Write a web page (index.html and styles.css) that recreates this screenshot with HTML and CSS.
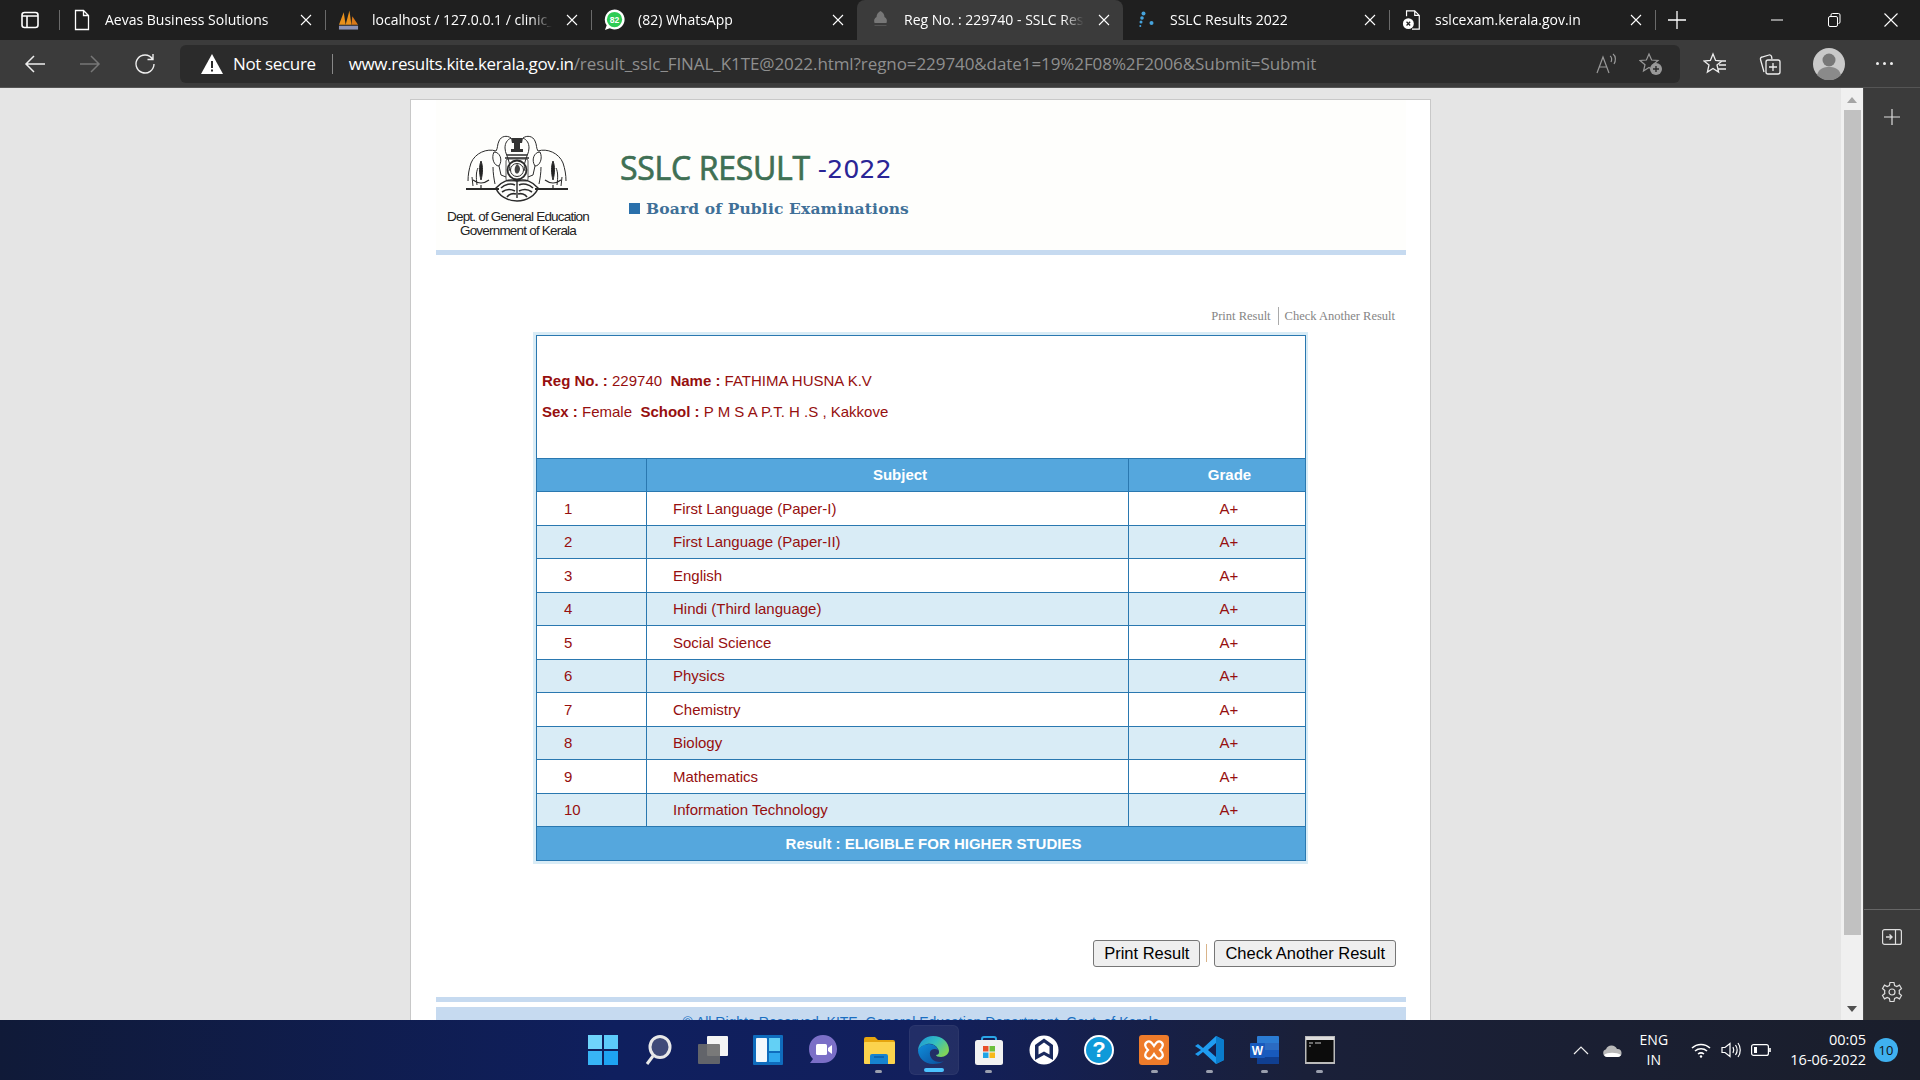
FILE: index.html
```html
<!DOCTYPE html>
<html lang="en">
<head>
    <meta charset="UTF-8">
    <title>Reg No. : 229740 - SSLC Result</title>
    <link rel="stylesheet" href="styles.css">
</head>
<body>
    <svg class="defs" width="0" height="0">
        <symbol id="x" viewBox="0 0 12 12"><path d="M1 1l10 10M11 1L1 11" fill="none" stroke="currentColor" stroke-width="1.1"/></symbol>
        <linearGradient id="edgeTop" x1="0" y1="0" x2="1" y2=".6"><stop offset="0" stop-color="#1b8fd8"/><stop offset=".55" stop-color="#33bfc0"/><stop offset="1" stop-color="#7fd35a"/></linearGradient>
        <linearGradient id="edgeLow" x1="0" y1="0" x2="1" y2="1"><stop offset="0" stop-color="#0f8fdc"/><stop offset="1" stop-color="#0b4c9a"/></linearGradient>
    </svg>

    <!-- tab strip -->
    <div class="tabstrip">
        <div class="tab-menu">
            <svg width="20" height="20" viewBox="0 0 20 20" fill="none" stroke="#fff" stroke-width="1.6"><rect x="2" y="2.5" width="16" height="15" rx="2.5"/><path d="M2 6h16M7 6v11" /></svg>
        </div>
        <div class="tab sep">
            <svg class="favicon" width="20" height="22" viewBox="0 0 20 22" fill="none" stroke="#fff" stroke-width="1.3"><path d="M3.5 1.5h8l5 5v14h-13zM11.5 1.5v5h5"/></svg>
            <span class="tab-title">Aevas Business Solutions</span>
            <svg class="tab-close"><use href="#x"/></svg>
        </div>
        <div class="tab sep">
            <svg class="favicon" width="21" height="22" viewBox="0 0 22 22"><path d="M1 16L6 3l2 13zM8 16L12 1l2 15z" fill="#e8901c"/><path d="M14 16l1-9 6 9z" fill="#d9791a"/><rect x="1" y="17" width="20" height="4" fill="#8d93b5"/></svg>
            <span class="tab-title">localhost / 127.0.0.1 / clinic_management</span>
            <svg class="tab-close"><use href="#x"/></svg>
        </div>
        <div class="tab sep">
            <svg class="favicon" width="21" height="24" viewBox="0 0 22 24"><path d="M11 1a10.500 10.500 0 1 1-5 19.700L1 22.500l1.800-5A10.500 10.500 0 0 1 11 1z" fill="#fff"/><circle cx="11" cy="11.500" r="8" fill="#2ecc55"/><text x="11" y="15" text-anchor="middle" class="wa-count">82</text></svg>
            <span class="tab-title">(82) WhatsApp</span>
            <svg class="tab-close"><use href="#x"/></svg>
        </div>
        <div class="tab active">
            <svg class="favicon" width="21" height="20" viewBox="0 0 18 20" fill="#777"><path d="M9 1c2 1 4 3 4 6 2 1 3 3 2 6H3C2 10 3 8 5 7c0-3 2-5 4-6z"/><rect x="3" y="15" width="12" height="1" fill="#555"/></svg>
            <span class="tab-title">Reg No. : 229740 - SSLC Result 2022</span>
            <svg class="tab-close"><use href="#x"/></svg>
        </div>
        <div class="tab">
            <svg class="favicon" width="21" height="20" viewBox="0 0 20 20" fill="#46a3dc"><circle cx="7" cy="3.5" r="2"/><circle cx="5.5" cy="8" r="1.8"/><circle cx="4.5" cy="12" r="1.5"/><circle cx="3.8" cy="16" r="1"/><circle cx="15" cy="13" r="2"/></svg>
            <span class="tab-title">SSLC Results 2022</span>
            <svg class="tab-close"><use href="#x"/></svg>
        </div>
        <div class="tab sep">
            <svg class="favicon" width="20" height="24" viewBox="0 0 22 24" fill="none" stroke="#fff" stroke-width="1.3"><path d="M5 8V2h9l5 5v15h-8M14 2v5h5"/><circle cx="7" cy="16" r="6" fill="#fff" stroke="none"/><path d="M5 14l4 4M9 14l-4 4" stroke="#222" stroke-width="1.4"/></svg>
            <span class="tab-title">sslcexam.kerala.gov.in</span>
            <svg class="tab-close"><use href="#x"/></svg>
        </div>
        <div class="new-tab">
            <svg width="20" height="20" viewBox="0 0 20 20"><path d="M10 1v18M1 10h18" stroke="#fff" stroke-width="1.3"/></svg>
        </div>
        <div class="win-controls">
            <svg width="16" height="16" viewBox="0 0 16 16"><path d="M2 8h12" stroke="#fff" stroke-width="1"/></svg>
            <svg width="16" height="16" viewBox="0 0 16 16" fill="none" stroke="#fff" stroke-width="1"><rect x="2.5" y="4.5" width="9" height="10" rx="1.5"/><path d="M5 4.5V3a1.5 1.5 0 0 1 1.5-1.5h6A1.5 1.5 0 0 1 14 3v7a1.5 1.5 0 0 1-1.5 1.5"/></svg>
            <svg width="16" height="16" viewBox="0 0 16 16"><path d="M1.5 1.5l13 13M14.5 1.5l-13 13" stroke="#fff" stroke-width="1.1"/></svg>
        </div>
    </div>

    <!-- toolbar -->
    <div class="toolbar">
        <div class="nav-btns">
            <svg width="22" height="22" viewBox="0 0 22 22" fill="none" stroke="#eee" stroke-width="1.5"><path d="M21 11H2M10 3l-8 8 8 8"/></svg>
            <svg width="22" height="22" viewBox="0 0 22 22" fill="none" stroke="#777" stroke-width="1.5"><path d="M1 11h19M12 3l8 8-8 8"/></svg>
            <svg width="22" height="22" viewBox="0 0 22 22" fill="none" stroke="#eee" stroke-width="1.4"><path d="M18.5 6A9 9 0 1 0 20 11M19 1v5.500h-5.500"/></svg>
        </div>
        <div class="addressbar">
            <svg class="warn" width="22" height="20" viewBox="0 0 22 20"><path d="M11 0l11 20H0z" fill="#fff"/><path d="M10 7h2v7h-2zM10 15.500h2v2h-2z" fill="#2b2b2b"/></svg>
            <span class="not-secure">Not secure</span>
            <span class="addr-sep"></span>
            <span class="url"><span class="url-host">www.results.kite.kerala.gov.in</span>/result_sslc_FINAL_K1TE@2022.html?regno=229740&amp;date1=19%2F08%2F2006&amp;Submit=Submit</span>
            <div class="addr-icons">
                <svg width="22" height="22" viewBox="0 0 22 22" fill="none" stroke="#999" stroke-width="1.2"><path d="M2 20L8 4l6 16M4 14h8M15 3c2 1 2 4 1 6M18 1c3 2 3 7 1 10"/></svg>
                <svg width="24" height="24" viewBox="0 0 24 24"><path d="M10 2l2.600 6 6.400.5-5 4.200 1.500 6.300L10 15.500 4.500 19 6 12.700 1 8.500 7.400 8z" fill="none" stroke="#999" stroke-width="1.2"/><circle cx="17" cy="17" r="6" fill="#999"/><path d="M17 14v6M14 17h6" stroke="#2b2b2b" stroke-width="1.4"/></svg>
            </div>
        </div>
        <div class="tool-icons">
            <svg width="24" height="24" viewBox="0 0 24 24" fill="none" stroke="#eee" stroke-width="1.3"><path d="M10 2l2.600 6.500 6.400.5-5 4 1.600 7L10 16.500 4.400 20 6 13 1 9l6.400-.5zM15 9h8M16 13h7M15 17h8"/></svg>
            <svg width="24" height="24" viewBox="0 0 24 24" fill="none" stroke="#eee" stroke-width="1.3"><path d="M6 20L2.500 7.500a2 2 0 0 1 1.500-2.500l7-2a2 2 0 0 1 2.500 1.500L14 7"/><rect x="8" y="8" width="14" height="14" rx="2"/><path d="M15 11v8M11 15h8"/></svg>
            <svg width="32" height="32" viewBox="0 0 32 32"><circle cx="16" cy="16" r="16" fill="#c9c9c9"/><circle cx="16" cy="12" r="6.500" fill="#777"/><path d="M4 27c2-7 7-8 12-8s10 1 12 8a16 16 0 0 1-24 0z" fill="#8a8a8a"/></svg>
            <span class="dots"><i></i><i></i><i></i></span>
        </div>
    </div>

    <div class="browser-body">
        <div class="viewport">
            <div class="card">
                <div class="banner">
                    <div class="emblem">
                        <svg class="emblem-art" width="107" height="68" viewBox="0 0 107 68" fill="none" stroke="#2a2a2a" stroke-width="1">
                            <g id="emblemHalf">
                                <path d="M46 3C42 0 36 1 34 6c-2 4-1 7-3 10C22 13 10 18 6 28c-2 6-3 12-3 18"/>
                                <path d="M46 3c-4 2-6 5-6 10 0 5 3 9 4 14 1 3 1 6 0 9"/>
                                <path d="M29 17c6 0 9 8 5 14-5 0-8-8-5-14zM34 31l2 9 5 2M7 42l1 9M13 33c-2 4-2 9-1 17M28 32c0 6 1 12 2 17"/>
                                <path d="M16 26c-2 5-2 12 0 19 2-7 2-14 0-19z" fill="#222"/>
                                <path d="M8 45q8 6 16 0M16 50v4" stroke-width="1.200"/>
                                <path d="M1 54h33" stroke-width="2.200"/>
                                <path d="M52 46c-8-3-16 1-21 7 2 7 11 13 21 13" stroke-width="1.400"/>
                                <path d="M36 53c4-4 10-5 14-3M37 57c4-3 9-3 13-1M42 62c2-3 6-4 9-3" stroke-width="1.600"/>
                            </g>
                            <use href="#emblemHalf" transform="translate(104 0) scale(-1 1)"/>
                            <path d="M46 3h12l-1 5h-2v6h3v3H46v-3h3V8h-2z" fill="#333" stroke="none"/>
                            <path d="M42 20h20M40 23h24" stroke-width="1.300"/>
                            <rect x="41" y="24" width="22" height="22" rx="2" stroke-width=".8"/>
                            <circle cx="52" cy="35" r="9.500" stroke-width="1.800"/>
                            <circle cx="52" cy="35" r="6.500"/>
                            <path d="M52 29c3 2 4 5 2 8-1 2-3 2-4 0-1-3 0-6 2-8z" fill="#444" stroke="none"/>
                            <path d="M52 45v18" stroke-width="1.400"/>
                        </svg>
                        <div class="emblem-text">Dept. of General Education</div>
                        <div class="emblem-text">Government of Kerala</div>
                    </div>
                    <div class="banner-title">
                        <div class="title-line">SSLC RESULT <span class="title-year">-2022</span></div>
                        <div class="board-line"><span class="board-mark"></span>Board of Public Examinations</div>
                    </div>
                </div>
                <div class="rule"></div>

                <div class="top-links">Print Result<span class="link-sep"></span>Check Another Result</div>

                <div class="result-box">
                    <table class="result-table">
                        <colgroup><col class="col-no"><col class="col-subject"><col class="col-grade"></colgroup>
                        <tr>
                            <td colspan="3" class="info-cell">
                                <div class="info-line"><b>Reg No. :</b> 229740 &nbsp;<b>Name :</b> FATHIMA HUSNA K.V</div>
                                <div class="info-line info-second"><b>Sex :</b> Female &nbsp;<b>School :</b> P M S A P.T. H .S , Kakkove</div>
                            </td>
                        </tr>
                        <tr class="head-row"><th></th><th class="shift">Subject</th><th class="shift">Grade</th></tr>
                        <tr><td class="no">1</td><td class="subject">First Language (Paper-I)</td><td class="grade">A+</td></tr>
                        <tr class="alt"><td class="no">2</td><td class="subject">First Language (Paper-II)</td><td class="grade">A+</td></tr>
                        <tr><td class="no">3</td><td class="subject">English</td><td class="grade">A+</td></tr>
                        <tr class="alt"><td class="no">4</td><td class="subject">Hindi (Third language)</td><td class="grade">A+</td></tr>
                        <tr><td class="no">5</td><td class="subject">Social Science</td><td class="grade">A+</td></tr>
                        <tr class="alt"><td class="no">6</td><td class="subject">Physics</td><td class="grade">A+</td></tr>
                        <tr><td class="no">7</td><td class="subject">Chemistry</td><td class="grade">A+</td></tr>
                        <tr class="alt"><td class="no">8</td><td class="subject">Biology</td><td class="grade">A+</td></tr>
                        <tr><td class="no">9</td><td class="subject">Mathematics</td><td class="grade">A+</td></tr>
                        <tr class="alt"><td class="no">10</td><td class="subject">Information Technology</td><td class="grade">A+</td></tr>
                        <tr class="head-row"><th colspan="3" class="shift">Result : ELIGIBLE FOR HIGHER STUDIES</th></tr>
                    </table>
                </div>

                <div class="actions">
                    <button type="button">Print Result</button>
                    <span class="action-sep"></span>
                    <button type="button">Check Another Result</button>
                </div>

                <div class="rule rule-bottom"></div>
                <div class="page-footer">© All Rights Reserved, KITE, General Education Department, Govt. of Kerala</div>
            </div>
        </div>
        <div class="scrollbar">
            <span class="arrow-up"></span>
            <span class="thumb"></span>
            <span class="arrow-down"></span>
        </div>
        <div class="sidebar">
            <svg class="side-plus" width="16" height="16" viewBox="0 0 16 16"><path d="M8 0v16M0 8h16" stroke="#ddd" stroke-width="1.2"/></svg>
            <div class="side-bottom">
                <svg width="20" height="16" viewBox="0 0 20 16" fill="none" stroke="#ddd" stroke-width="1.2"><rect x=".6" y=".6" width="18.800" height="14.800" rx="2"/><path d="M13.500 1v14"/><path d="M4 8h6M7.500 5.500L10 8l-2.500 2.500" stroke-width="1.400"/></svg>
                <svg width="22" height="22" viewBox="0 0 22 22" fill="none" stroke="#ddd" stroke-width="1.2"><circle cx="11" cy="11" r="3"/><path d="M9 1.500h4l.6 3 2.200 1 2.700-1.400 2 3.400-2.300 2a6 6 0 0 1 0 3l2.300 2-2 3.400-2.700-1.400-2.200 1-.6 3H9l-.6-3-2.200-1-2.700 1.400-2-3.400 2.300-2a6 6 0 0 1 0-3l-2.300-2 2-3.400 2.700 1.400 2.200-1z"/></svg>
            </div>
        </div>
    </div>

    <!-- windows taskbar -->
    <div class="taskbar">
        <div class="task-apps">
            <div class="app"><svg width="30" height="30" viewBox="0 0 30 30"><g fill="#4cc2ff"><rect x="0" y="0" width="14" height="14" fill="#6fd4fb"/><rect x="16" y="0" width="14" height="14" fill="#5ccbfb"/><rect x="0" y="16" width="14" height="14" fill="#38b4f5"/><rect x="16" y="16" width="14" height="14" fill="#1ea3f2"/></g></svg></div>
            <div class="app"><svg width="28" height="30" viewBox="0 0 28 30" fill="#3f4a78" stroke="#e8e8e8" stroke-width="3"><ellipse cx="16" cy="12" rx="10" ry="10.500"/><path d="M9 21L3 29" fill="none"/></svg></div>
            <div class="app"><svg width="32" height="30" viewBox="0 0 32 30"><rect x="10" y="1" width="21" height="20" rx="1" fill="#f4f4f4"/><rect x="1" y="9" width="22" height="20" rx="1" fill="#6b6b6b" fill-opacity=".9"/></svg></div>
            <div class="app"><svg width="30" height="30" viewBox="0 0 30 30"><rect width="30" height="30" rx="1" fill="#0f6cbd"/><rect x="3" y="3" width="11" height="24" rx="1" fill="#f4f8fc"/><rect x="16" y="3" width="11" height="13" fill="#63d0f5"/><rect x="16" y="18" width="11" height="9" fill="#2fa8ee"/></svg></div>
            <div class="app"><svg width="30" height="32" viewBox="0 0 30 32"><path d="M15 1c8 0 14 6 14 14s-6 14-14 14H2l3-4C2 22 1 19 1 15 1 7 7 1 15 1z" fill="#7b6fc7"/><rect x="8" y="10" width="11" height="11" rx="1.500" fill="#fff"/><path d="M20 14l4-3v9l-4-3z" fill="#fff"/></svg></div>
            <div class="app running"><svg width="32" height="28" viewBox="0 0 32 28"><path d="M1 3a2 2 0 0 1 2-2h9l3 3h15a2 2 0 0 1 2 2v4H1z" fill="#e6a50e"/><rect x="1" y="6" width="31" height="22" rx="1" fill="#fcd34d"/><path d="M9 18h14a2 2 0 0 1 2 2v8H7v-8a2 2 0 0 1 2-2z" fill="#1783d0"/><path d="M11 21h10" stroke="#0b5ea8" stroke-width="1.500"/></svg></div>
            <div class="app running app-active"><svg width="31" height="28" viewBox="0 0 31 28"><path d="M0 14c2-3 6-6 11-6 5 0 8 3 9 6-3-2-7-1-8 2-1 5 3 10 10 10 2 0 4-1 5-2-3 3-7 4-12 4C7 28 0 22 0 14z" fill="url(#edgeLow)"/><path d="M15 0c9 0 16 6 16 14 0 4-4 7-8 7-3 0-5-1-5-2 3 0 4-3 2-6-2-4-6-6-11-5-4 1-7 3-9 6C1 6 7 0 15 0z" fill="url(#edgeTop)"/></svg></div>
            <div class="app running"><svg width="30" height="30" viewBox="0 0 30 30"><path d="M8 7V4a2 2 0 0 1 2-2h10a2 2 0 0 1 2 2v3" fill="none" stroke="#2aa6e8" stroke-width="2"/><rect x="1" y="5" width="28" height="25" rx="2.500" fill="#f2f2f2"/><rect x="9" y="11" width="5.500" height="5.500" fill="#e8502a"/><rect x="15.500" y="11" width="5.500" height="5.500" fill="#6cbf3c"/><rect x="9" y="17.500" width="5.500" height="5.500" fill="#1ea3e6"/><rect x="15.500" y="17.500" width="5.500" height="5.500" fill="#f8b91a"/></svg></div>
            <div class="app"><svg width="30" height="30" viewBox="0 0 30 30"><circle cx="15" cy="15" r="14.500" fill="#fff"/><path d="M15 3.500l9 6.500v15l-9-5-9 5V10z" fill="#1a2a5e"/><path d="M15 7.500l5.500 4v8l-5.500-3-5.500 3v-8z" fill="#fff"/></svg></div>
            <div class="app"><svg width="30" height="30" viewBox="0 0 30 30"><circle cx="15" cy="15" r="15" fill="#fff"/><circle cx="15" cy="15" r="13" fill="#0f9ad9"/><text x="15" y="22" text-anchor="middle" class="help-mark">?</text></svg></div>
            <div class="app running"><svg width="30" height="30" viewBox="0 0 30 30"><rect width="30" height="30" rx="3" fill="#ee7b2a"/><path d="M8 7c3-2 5 1 7 4 2-3 4-6 7-4s2 5-1 8c3 3 4 6 1 8s-5-1-7-4c-2 3-4 6-7 4s-2-5 1-8c-3-3-4-6-1-8z" fill="none" stroke="#fff" stroke-width="2.200"/></svg></div>
            <div class="app running"><svg width="30" height="30" viewBox="0 0 30 30"><path d="M21 1l8 4v20l-8 4L8 17l-5 4-3-2 6-4-6-4 3-2 5 4z" fill="#1f9cf0"/><path d="M21 8l-8 7 8 7z" fill="#14204f"/><path d="M21 1l8 4v20l-8 4z" fill="#0a7ccc"/></svg></div>
            <div class="app running"><svg width="30" height="30" viewBox="0 0 30 30"><rect x="7" y="1" width="22" height="28" rx="1" fill="#2b7cd3"/><rect x="7" y="8" width="22" height="7" fill="#2b6bc2"/><rect x="7" y="15" width="22" height="7" fill="#185abd"/><rect x="7" y="22" width="22" height="7" fill="#103f91"/><rect x="0" y="8" width="15" height="15" rx="1" fill="#185abd"/><text x="7.500" y="20" text-anchor="middle" class="word-mark">W</text></svg></div>
            <div class="app running"><svg width="30" height="28" viewBox="0 0 30 28"><rect x="0" y="0" width="30" height="28" fill="#bbb"/><rect x="1" y="1" width="28" height="3" fill="#ddd"/><rect x="1.500" y="4" width="27" height="22" fill="#0c0c0c"/><path d="M4 7h4M10 7h6M4 10h2" stroke="#ccc" stroke-width="1"/></svg></div>
        </div>
        <div class="tray">
            <svg class="tray-chevron" width="16" height="9" viewBox="0 0 16 9"><path d="M1 8l7-7 7 7" fill="none" stroke="#eee" stroke-width="1.200"/></svg>
            <svg class="tray-cloud" width="20" height="13" viewBox="0 0 20 13"><path d="M5 13a4 4 0 0 1-1-7.800A6 6 0 0 1 15 5a4 4 0 0 1 1 8z" fill="#b9b9b9"/><path d="M2 11c3-3 13-3 17 0-1 1-2 2-3 2H5c-1 0-2-1-3-2z" fill="#fff"/></svg>
            <div class="tray-lang"><span>ENG</span><span>IN</span></div>
            <svg class="tray-wifi" width="20" height="16" viewBox="0 0 20 16" fill="none" stroke="#fff" stroke-width="1.500"><path d="M1 6a13 13 0 0 1 18 0M4 9a9 9 0 0 1 12 0M7 12a5 5 0 0 1 6 0"/><circle cx="10" cy="14.500" r="1.200" fill="#fff" stroke="none"/></svg>
            <svg class="tray-sound" width="20" height="16" viewBox="0 0 20 16" fill="none" stroke="#fff" stroke-width="1.200"><path d="M1 5.500h3L9 1.500v13l-5-4H1zM12 5c1 2 1 4 0 6M14.500 3c2 3 2 7 0 10M17 1c3 4 3 10 0 14"/></svg>
            <svg class="tray-battery" width="20" height="12" viewBox="0 0 20 12" fill="none" stroke="#fff" stroke-width="1.200"><rect x=".6" y=".6" width="16.800" height="10.800" rx="2"/><rect x="3" y="3" width="3" height="6" fill="#fff" stroke="none"/><path d="M19 4v4" stroke-width="1.600"/></svg>
            <div class="tray-clock"><span>00:05</span><span>16-06-2022</span></div>
            <span class="tray-badge">10</span>
        </div>
    </div>
</body>
</html>
```

FILE: styles.css
```css
html, body {
    margin: 0;
    padding: 0;
    height: 100%;
}

body {
    width: 1920px;
    height: 1080px;
    overflow: hidden;
    display: flex;
    flex-direction: column;
    font-family: "Open Sans", "Noto Sans", sans-serif;
    color: #fff;
}

.defs {
    position: absolute;
}

/* tabs */
.tabstrip {
    height: 40px;
    flex: none;
    display: flex;
    align-items: center;
    background: #1f1f1f;
    font-size: 14px;
}

.tab-menu {
    width: 59px;
    box-sizing: border-box;
    padding-left: 20px;
    display: flex;
}

.tab {
    width: 266px;
    height: 40px;
    box-sizing: border-box;
    flex: none;
    display: flex;
    align-items: center;
    padding: 0 11px 0 13px;
    position: relative;
}

.tab.sep::before,
.new-tab::before {
    content: "";
    position: absolute;
    left: 0;
    top: 10px;
    height: 20px;
    width: 1px;
    background: #6a6a6a;
}

.tab.active {
    background: #3b3b3b;
    border-radius: 8px 8px 0 0;
}

.favicon {
    flex: none;
    margin-right: 13px;
}

.tab-title {
    flex: 1;
    padding-bottom: 2px;
    white-space: nowrap;
    overflow: hidden;
    -webkit-mask-image: linear-gradient(90deg, #000 88%, transparent 100%);
    mask-image: linear-gradient(90deg, #000 88%, transparent 100%);
}

.tab-close {
    flex: none;
    width: 12px;
    height: 12px;
    margin-left: 14px;
    margin-right: 2px;
    color: #fff;
}

.wa-count {
    font: bold 9px "Liberation Sans", sans-serif;
    fill: #fff;
}

.new-tab {
    height: 40px;
    flex: none;
    position: relative;
    display: flex;
    align-items: center;
    padding-left: 12px;
}

.win-controls {
    margin-left: auto;
    display: flex;
    gap: 41px;
    padding-right: 21px;
}

/* toolbar */
.toolbar {
    height: 48px;
    flex: none;
    box-sizing: border-box;
    display: flex;
    align-items: center;
    background: #3b3b3b;
    border-bottom: 1px solid #555;
}

.nav-btns {
    width: 180px;
    box-sizing: border-box;
    padding-left: 24px;
    display: flex;
    gap: 33px;
}

.addressbar {
    width: 1500px;
    height: 38px;
    box-sizing: border-box;
    display: flex;
    align-items: center;
    background: #2b2b2b;
    border-radius: 6px;
    padding-left: 21px;
    font-size: 17px;
    letter-spacing: -0.35px;
}

.not-secure {
    margin-left: 10px;
}

.addr-sep {
    width: 1px;
    height: 20px;
    background: #888;
    margin: 0 16px;
}

.url {
    color: #8f8f8f;
    white-space: nowrap;
    letter-spacing: -0.08px;
}

.url-host {
    color: #fff;
    letter-spacing: -0.35px;
}

.addr-icons {
    margin-left: auto;
    display: flex;
    align-items: center;
    gap: 22px;
    padding-right: 17px;
}

.tool-icons {
    display: flex;
    align-items: center;
    margin-left: 23px;
    gap: 31px;
}

.dots {
    display: flex;
    gap: 4px;
}

.dots i {
    width: 3px;
    height: 3px;
    border-radius: 50%;
    background: #eee;
}

/* main area */
.browser-body {
    flex: 1;
    min-height: 0;
    display: flex;
}

.viewport {
    width: 1841px;
    flex: none;
    overflow: hidden;
    background: #e5e5e5;
    box-sizing: border-box;
    padding-top: 11px;
}

.card {
    width: 1021px;
    box-sizing: border-box;
    margin: 0 auto;
    padding: 0 24px 0 25px;
    background: #fff;
    border: 1px solid #c8c8c8;
    min-height: 1000px;
}

.banner {
    height: 150px;
    display: flex;
    background: #fefefc;
}

.emblem {
    width: 164px;
    flex: none;
    box-sizing: border-box;
    padding-top: 35px;
    display: flex;
    flex-direction: column;
    align-items: center;
    color: #222;
    font-family: "Liberation Sans", sans-serif;
}

.emblem-art {
    margin-bottom: 7px;
    filter: blur(0.35px);
}

.emblem-text {
    font-size: 13.500px;
    line-height: 14px;
    letter-spacing: -0.8px;
    white-space: nowrap;
}

.banner-title {
    margin-left: 20px;
    padding-top: 47px;
}

.title-line {
    font-size: 32px;
    line-height: 42px;
    letter-spacing: -0.3px;
    color: #3f7054;
    white-space: nowrap;
    -webkit-text-stroke: 0.7px #3f7054;
}

.title-year {
    font-family: "DejaVu Sans", sans-serif;
    font-size: 25.500px;
    letter-spacing: 0;
    vertical-align: 2px;
    color: #2a2596;
    -webkit-text-stroke: 0;
}

.board-line {
    display: flex;
    align-items: center;
    font-family: "DejaVu Serif", serif;
    font-weight: bold;
    font-size: 15.500px;
    letter-spacing: 0.15px;
    color: #3f7098;
    margin: 9px 0 0 9px;
    white-space: nowrap;
}

.board-mark {
    width: 11px;
    height: 11px;
    background: #2a70ab;
    margin-right: 6px;
}

.rule {
    height: 5px;
    background: #c6daf0;
}

.top-links {
    margin-top: 50px;
    margin-bottom: 5px;
    height: 22px;
    line-height: 22px;
    padding-right: 11px;
    display: flex;
    justify-content: flex-end;
    align-items: center;
    font-family: "Liberation Serif", serif;
    font-size: 12.500px;
    color: #858585;
}

.link-sep {
    width: 1px;
    height: 18px;
    background: #aaa;
    margin: 0 6px 0 7px;
}

.result-box {
    width: 775px;
    box-sizing: border-box;
    margin-left: 97px;
    border: 3px solid #d9ecf6;
}

.result-table {
    width: 769px;
    table-layout: fixed;
    border-collapse: collapse;
    font-family: "Liberation Sans", sans-serif;
    font-size: 15px;
    color: #960f0f;
}

.col-no { width: 110px; }
.col-subject { width: 482px; }
.col-grade { width: 177px; }

.result-table td,
.result-table th {
    border: 1px solid #2a78b0;
    height: 33.500px;
    padding: 0;
    box-sizing: border-box;
}

.result-table .info-cell {
    height: 122.500px;
    padding: 0 0 0 5px;
    vertical-align: top;
}

.info-line {
    margin-top: 35px;
    line-height: 20px;
}

.info-second {
    margin-top: 11px;
}

.head-row th {
    background: #55a7dd;
    color: #fff;
    font-size: 15px;
    font-weight: bold;
}

.result-table .shift {
    padding-left: 25px;
}

.alt td {
    background: #d9ecf6;
}

.result-table .no {
    padding-left: 27px;
}

.result-table .subject {
    padding-left: 26px;
}

.result-table .grade {
    text-align: center;
    padding-left: 24px;
}

.actions {
    margin-top: 76px;
    height: 27px;
    padding-right: 10px;
    display: flex;
    justify-content: flex-end;
    align-items: center;
}

.actions button {
    height: 27px;
    padding: 0 10px;
    font-family: "Liberation Sans", sans-serif;
    font-size: 16.500px;
    color: #000;
    background: #efefef;
    border: 1px solid #767676;
    border-radius: 3px;
}

.action-sep {
    width: 1px;
    height: 18px;
    background: #d9b48a;
    margin: 0 7px 0 6px;
}

.rule-bottom {
    margin-top: 30px;
}

.page-footer {
    margin-top: 5px;
    height: 80px;
    padding-top: 7px;
    box-sizing: border-box;
    background: #c6daf0;
    color: #1a6fc2;
    text-align: center;
    font-family: "Liberation Sans", sans-serif;
    font-size: 14px;
}

.scrollbar {
    width: 22px;
    flex: none;
    display: flex;
    flex-direction: column;
    align-items: center;
    background: #f0f0f0;
    box-sizing: border-box;
    padding-top: 9px;
}

.arrow-up {
    border: 5px solid transparent;
    border-top: 0;
    border-bottom: 6px solid #a5a5a5;
}

.thumb {
    width: 17px;
    height: 825px;
    margin-top: 7px;
    background: #c1c1c1;
}

.arrow-down {
    margin-top: auto;
    margin-bottom: 8px;
    border: 5px solid transparent;
    border-bottom: 0;
    border-top: 6px solid #505050;
}

.sidebar {
    width: 57px;
    flex: none;
    box-sizing: border-box;
    background: #3b3b3b;
    border-left: 1px solid #4a4a4a;
    display: flex;
    flex-direction: column;
    align-items: center;
    padding-top: 21px;
}

.side-bottom {
    margin-top: auto;
    align-self: stretch;
    border-top: 1px solid #666;
    height: 111px;
    box-sizing: border-box;
    padding: 19px 0 17px;
    display: flex;
    flex-direction: column;
    align-items: center;
    justify-content: space-between;
}

/* taskbar */
.taskbar {
    height: 60px;
    flex: none;
    display: flex;
    align-items: center;
    background: linear-gradient(90deg, #101a38 0, #0f1f5e 32%, #121f5c 48%, #1a2039 68%, #1a1e2b 100%);
}

.task-apps {
    margin-left: 575px;
    display: flex;
}

.app {
    width: 55.200px;
    height: 50px;
    box-sizing: border-box;
    display: flex;
    align-items: center;
    justify-content: center;
    position: relative;
}

.app.running::after {
    content: "";
    position: absolute;
    left: 24px;
    bottom: 2px;
    width: 7px;
    height: 3px;
    border-radius: 2px;
    background: #9a9fae;
}

.app.app-active {
    width: 50px;
    margin: 0 2.600px;
    background: rgba(255, 255, 255, 0.07);
    border: 1px solid rgba(255, 255, 255, 0.04);
    border-radius: 6px;
}

.app.app-active::after {
    left: 14px;
    width: 20px;
    height: 4px;
    background: #4cc2ff;
}

.help-mark {
    font: bold 22px "Liberation Sans", sans-serif;
    fill: #fff;
}

.word-mark {
    font: bold 12px "Liberation Sans", sans-serif;
    fill: #fff;
}

.tray {
    margin-left: auto;
    height: 60px;
    display: flex;
    align-items: center;
    font-size: 14px;
    padding-right: 22px;
}

.tray-cloud {
    margin-left: 13px;
}

.tray-lang {
    width: 50px;
    margin-left: 7px;
    display: flex;
    flex-direction: column;
    align-items: center;
    line-height: 20px;
}

.tray-wifi {
    margin-left: 12px;
}

.tray-sound {
    margin-left: 10px;
}

.tray-battery {
    margin-left: 10px;
}

.tray-clock {
    margin-left: 19.500px;
    display: flex;
    flex-direction: column;
    align-items: flex-end;
    line-height: 20px;
    font-size: 14.500px;
}

.tray-badge {
    width: 24px;
    height: 24px;
    margin-left: 8px;
    border-radius: 50%;
    background: #3fb1f0;
    color: #111;
    font-size: 13px;
    line-height: 24px;
    text-align: center;
}
```
